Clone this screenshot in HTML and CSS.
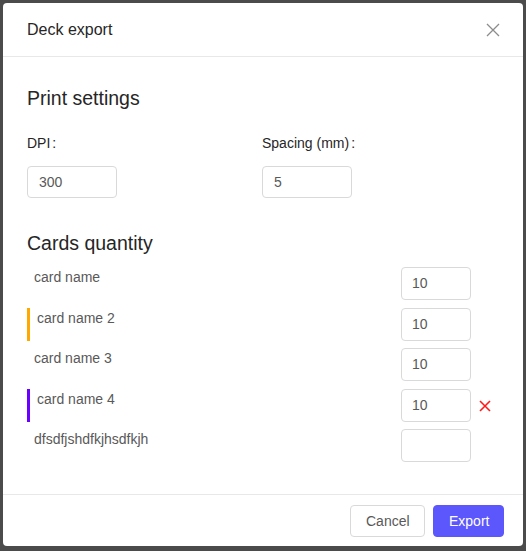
FILE: index.html
```html
<!DOCTYPE html>
<html>
<head>
<meta charset="utf-8">
<link rel="stylesheet" href="styles.css">
</head>
<body>
<div class="modal">
  <div class="modal-header">
    <span class="title">Deck export</span>
    <svg class="close" width="14" height="14" viewBox="0 0 14 14"><path d="M1 1L13 13M13 1L1 13" stroke="#8c8c8c" stroke-width="1.3" fill="none"/></svg>
  </div>
  <div class="modal-body">
    <h2 class="section-title">Print settings</h2>
    <div class="settings">
      <div class="field">
        <div class="label">DPI<span class="colon">:</span></div>
        <div class="input">300</div>
      </div>
      <div class="field">
        <div class="label">Spacing (mm)<span class="colon">:</span></div>
        <div class="input">5</div>
      </div>
    </div>
    <h2 class="section-title second">Cards quantity</h2>
    <div class="cards">
      <div class="card-row">
        <div class="card-name">card name</div>
        <div class="input qty">10</div>
        <div class="del"></div>
      </div>
      <div class="card-row">
        <div class="card-name bar orange">card name 2</div>
        <div class="input qty">10</div>
        <div class="del"></div>
      </div>
      <div class="card-row">
        <div class="card-name">card name 3</div>
        <div class="input qty">10</div>
        <div class="del"></div>
      </div>
      <div class="card-row">
        <div class="card-name bar purple">card name 4</div>
        <div class="input qty">10</div>
        <div class="del"><svg width="12" height="12" viewBox="0 0 12 12"><path d="M1 1L11 11M11 1L1 11" stroke="#ff1a1a" stroke-width="1.6" fill="none"/></svg></div>
      </div>
      <div class="card-row">
        <div class="card-name">dfsdfjshdfkjhsdfkjh</div>
        <div class="input qty"></div>
        <div class="del"></div>
      </div>
    </div>
  </div>
  <div class="modal-footer">
    <button class="btn">Cancel</button>
    <button class="btn primary">Export</button>
  </div>
</div>
</body>
</html>
```
FILE: styles.css
```css
html, body {
  margin: 0;
  padding: 0;
}
body {
  width: 526px;
  height: 551px;
  background: #4b4b4b;
  font-family: "Liberation Sans", Arial, sans-serif;
  overflow: hidden;
  padding: 3px;
  box-sizing: border-box;
}
.modal {
  width: 520px;
  height: 543px;
  background: #fff;
  border-radius: 4px;
  display: flex;
  flex-direction: column;
  overflow: hidden;
}
.modal-header {
  height: 54px;
  border-bottom: 1px solid #e8e8e8;
  display: flex;
  align-items: center;
  justify-content: space-between;
  padding: 0 23px 0 24px;
  box-sizing: border-box;
  flex: none;
}
.title {
  font-size: 16px;
  color: #262626;
  margin-top: 1px;
}
.close {
  display: block;
}
.modal-body {
  flex: 1;
  padding: 29px 24px 0 24px;
}
.section-title {
  margin: 0;
  font-size: 19.5px;
  font-weight: normal;
  color: #262626;
  line-height: 24px;
}
.section-title.second {
  margin-top: 33px;
}
.settings {
  display: grid;
  grid-template-columns: 235px 1fr;
  margin-top: 23px;
}
.label {
  font-size: 14px;
  color: #262626;
  line-height: 20px;
}
.colon {
  margin-left: 2px;
}
.input {
  margin-top: 13px;
  width: 90px;
  height: 32px;
  border: 1px solid #d9d9d9;
  border-radius: 4px;
  box-sizing: border-box;
  font-size: 14px;
  color: #595959;
  padding-left: 11px;
  line-height: 30px;
}
.cards {
  margin-top: 12px;
  display: flex;
  flex-direction: column;
  gap: 7.5px;
}
.card-row {
  display: flex;
  align-items: stretch;
  height: 33px;
}
.card-name {
  flex: 1;
  font-size: 14px;
  color: #595959;
  padding-left: 7px;
  line-height: 20px;
}
.card-name.bar {
  border-left: 3px solid;
  padding-left: 7px;
}
.card-name.orange { border-left-color: #ffa800; }
.card-name.purple { border-left-color: #6a00ff; }
.input.qty {
  margin-top: 0;
  width: 70px;
  height: 33px;
  line-height: 31px;
  padding-left: 10px;
}
.del {
  width: 28px;
  display: flex;
  align-items: center;
  justify-content: center;
  padding-top: 2px;
  box-sizing: border-box;
}
.modal-footer {
  flex: none;
  border-top: 1px solid #e8e8e8;
  padding: 10px 19px 9px 0;
  display: flex;
  justify-content: flex-end;
  gap: 8px;
}
.btn {
  height: 32px;
  font-family: "Liberation Sans", Arial, sans-serif;
  font-size: 14px;
  border-radius: 4px;
  border: 1px solid #d9d9d9;
  background: #fff;
  color: #595959;
  padding: 0 15px;
  width: 75px;
}
.btn.primary {
  background: #5c57fd;
  border-color: #5c57fd;
  color: #fff;
  width: 71px;
}
```
